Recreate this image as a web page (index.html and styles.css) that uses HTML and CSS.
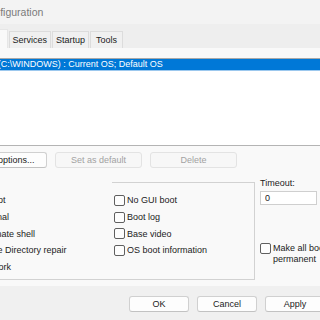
FILE: index.html
```html
<!DOCTYPE html>
<html>
<head>
    <meta charset="UTF-8">
    <title>System Configuration</title>
    <link rel="stylesheet" href="styles.css">
</head>
<body>
<div class="window">
    <div class="titlebar">
        <span class="title">System Configuration</span>
    </div>

    <div class="tabs">
        <div class="tab">General</div>
        <div class="tab active">Boot</div>
        <div class="tab">Services</div>
        <div class="tab">Startup</div>
        <div class="tab">Tools</div>
    </div>

    <div class="page">
        <div class="oslist">
            <div class="os-item selected">Windows 11 (C:\WINDOWS) : Current OS; Default OS</div>
        </div>

        <div class="os-buttons">
            <button class="btn wide">Advanced options...</button>
            <button class="btn" disabled>Set as default</button>
            <button class="btn" disabled>Delete</button>
        </div>

        <div class="options">
            <fieldset class="boot-options">
                <legend>Boot options</legend>
                <div class="opt-grid">
                    <label class="check"><em class="box"></em>Safe boot</label>
                    <label class="radio"><em class="dot"></em>Minimal</label>
                    <label class="radio"><em class="dot"></em>Alternate shell</label>
                    <label class="radio"><em class="dot"></em>Active Directory repair</label>
                    <label class="radio"><em class="dot"></em>Network</label>
                    <label class="check"><em class="box"></em>No GUI boot</label>
                    <label class="check"><em class="box"></em>Boot log</label>
                    <label class="check"><em class="box"></em>Base video</label>
                    <label class="check"><em class="box"></em>OS boot information</label>
                </div>
            </fieldset>

            <div class="side">
                <div class="side-label">Timeout:</div>
                <div class="timeout-row">
                    <input type="text" class="timeout" value="0"/>
                    <span>seconds</span>
                </div>
                <label class="check permanent"><em class="box"></em><span>Make all boot settings permanent</span></label>
            </div>
        </div>
    </div>

    <div class="footer">
        <button class="btn">OK</button>
        <button class="btn">Cancel</button>
        <button class="btn">Apply</button>
        <button class="btn">Help</button>
    </div>
</div>
</body>
</html>
```

FILE: styles.css
```css
* {
    margin: 0;
    padding: 0;
    box-sizing: border-box;
}

html, body {
    width: 100%;
    height: 100%;
    overflow: hidden;
}

body {
    background: #eeeeee;
    font-family: "Segoe UI", "Liberation Sans", Arial, sans-serif;
    font-size: 9px;
    color: #1b1b1b;
}

/* the window is wider than the shot, its left edge is cut off */
.window {
    margin-left: -70px;
    width: 473px;
}

.titlebar {
    height: 24px;
    padding-left: 13px;
    background: #f3f3f3;
    display: flex;
    align-items: center;
}

.title {
    font-size: 10.5px;
    color: #7a7a7a;
}

.tabs {
    display: flex;
    align-items: flex-end;
    height: 19px;
    margin-top: 5px;
}

.tab {
    height: 17px;
    line-height: 16px;
    padding: 0 3px;
    margin-right: 1px;
    background: #f0f0f0;
    border: 1px solid #dcdcdc;
    border-bottom: none;
}

.tab.active {
    height: 19px;
    padding: 0 8px;
    background: #f9f9f9;
    border-color: #e6e6e6;
}

.tab:last-child {
    padding: 0 5px;
}

.page {
    margin: 0 10px 0 4px;
    padding: 10px 9px 6px;
    background: #f9f9f9;
}

.oslist {
    height: 88px;
    background: #fff;
    border: 1px solid #b4b4b4;
    border-top-color: #a8a8a8;
}

.os-item {
    height: 12px;
    line-height: 11px;
    padding-left: 3px;
    white-space: nowrap;
}

.os-item.selected {
    background: #0078d7;
    color: #fff;
    border-bottom: 1px solid #9cc8ee;
}

.btn {
    width: 87px;
    height: 16px;
    font-family: inherit;
    font-size: 9px;
    color: #1b1b1b;
    background: #fdfdfd;
    border: 1px solid #d0d0d0;
    border-bottom-color: #c2c2c2;
    border-radius: 3px;
}

.btn.wide {
    width: 104px;
}

.btn[disabled] {
    color: #a2a2a2;
    background: #f7f7f7;
    border-color: #e3e3e3;
}

.os-buttons {
    display: flex;
    gap: 8px;
    margin-top: 6px;
}

.options {
    display: flex;
    align-items: flex-start;
    margin-top: 9px;
}

.boot-options {
    width: 312px;
    padding: 4px 0 4px 0;
    border: 1px solid #d2d2d2;
    min-width: 0;
}

/* the title sits left of the shot, its gap runs on to the right column */
.boot-options legend {
    width: 168px;
    line-height: 11px;
    color: #1b1b1b;
}

.opt-grid {
    display: grid;
    grid-template-columns: 160px auto;
    grid-template-rows: repeat(5, 16.7px);
    grid-auto-flow: column;
    margin-left: 10px;
}

.check, .radio {
    display: flex;
    align-items: center;
    gap: 2px;
    white-space: nowrap;
}

.radio {
    margin-left: 11px;
}

.box, .dot {
    display: block;
    flex: none;
    width: 11px;
    height: 11px;
    background: #fdfdfd;
    border: 1px solid #5f5f5f;
    border-radius: 2px;
}

.dot {
    border-radius: 50%;
}

.side {
    margin-left: 5px;
}

.side-label {
    line-height: 12px;
}

.timeout-row {
    display: flex;
    align-items: center;
    gap: 6px;
    margin-top: 2px;
}

.timeout {
    display: block;
    width: 57px;
    height: 14px;
    padding: 0 4px;
    font-family: inherit;
    font-size: 9px;
    color: #1b1b1b;
    background: #fff;
    border: 1px solid #cfcfcf;
    outline: none;
}

.permanent {
    align-items: flex-start;
    margin-top: 38px;
    width: 110px;
    white-space: normal;
    line-height: 11px;
}

.footer {
    display: flex;
    justify-content: flex-end;
    gap: 8px;
    height: 40px;
    padding: 10px 10px 0 0;
    background: #f0f0f0;
}

.footer .btn {
    width: 60px;
}
```
